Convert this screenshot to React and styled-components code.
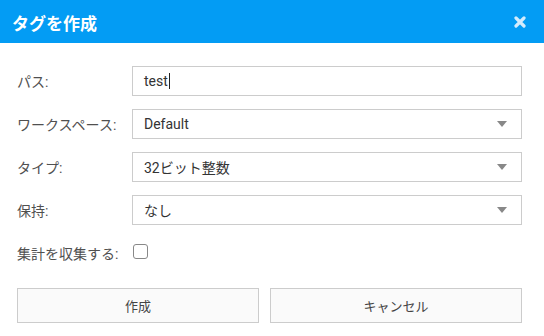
import React from 'react';
import styled, { createGlobalStyle } from 'styled-components';

const GlobalStyle = createGlobalStyle`
  body {
    margin: 0;
    background: #fff;
    font-family: Roboto, "Noto Sans CJK JP", sans-serif;
  }
`;

const Dialog = styled.div`
  width: 544px;
  height: 336px;
  background: #fff;
  overflow: hidden;
`;

const Header = styled.div`
  align-items: center;
  background: #039cf4;
  display: flex;
  height: 43px;
  justify-content: space-between;
  padding: 0 18px 0 12px;
`;

const Title = styled.h1`
  color: #fff;
  font-size: 17px;
  font-weight: bold;
  margin: 0;
  padding-top: 1px;
`;

const Close = styled.span`
  align-items: center;
  display: flex;
  height: 12px;
  justify-content: center;
  width: 12px;
`;

const Body = styled.div`
  display: flex;
  flex-direction: column;
  padding: 23px 22px 0 17px;
`;

const Row = styled.div`
  align-items: center;
  display: grid;
  grid-template-columns: 115px 1fr;
  height: 30px;
  margin-bottom: 13px;
`;

const Label = styled.label`
  color: #505050;
  font-size: 14px;
  font-weight: 400;
  white-space: nowrap;
`;

const Field = styled.div`
  align-items: center;
  border: 1px solid #ccc;
  box-sizing: border-box;
  color: #333;
  display: flex;
  font-size: 14px;
  height: 30px;
  justify-content: space-between;
  padding: 0 14px 0 11px;
`;

const Value = styled.span`
  font-weight: 400;
`;

const Caret = styled.span`
  background: #222;
  display: inline-block;
  height: 16px;
  margin-left: 1px;
  vertical-align: -3px;
  width: 1px;
`;

const Arrow = styled.span`
  border-left: 5px solid transparent;
  border-right: 5px solid transparent;
  border-top: 6px solid #888;
  height: 0;
  width: 0;
`;

const Check = styled.span`
  border: 1.5px solid #888;
  border-radius: 3px;
  box-sizing: border-box;
  display: inline-block;
  height: 15px;
  width: 15px;
`;

const CheckRow = styled(Row)`
  grid-template-columns: 116px 1fr;
  margin-bottom: 0;
`;

const Buttons = styled.div`
  display: grid;
  gap: 11px;
  grid-template-columns: 242px 252px;
  margin-top: 20px;
`;

const Button = styled.button`
  background: #fafafa;
  border: 1px solid #ccc;
  color: #444;
  font-family: Roboto, "Noto Sans CJK JP", sans-serif;
  font-size: 13px;
  font-weight: 400;
  height: 35px;
  padding: 0;
`;

export default function App() {
  return (
    <Dialog>
      <GlobalStyle />
      <Header>
        <Title>タグを作成</Title>
        <Close>
          <svg width="12" height="12" viewBox="0 0 12 12">
            <path d="M2 2 L10 10 M10 2 L2 10" stroke="#d3ecfd" strokeWidth="3.2" strokeLinecap="round" />
          </svg>
        </Close>
      </Header>
      <Body>
        <Row>
          <Label>パス:</Label>
          <Field>
            <Value>test<Caret /></Value>
          </Field>
        </Row>
        <Row>
          <Label>ワークスペース:</Label>
          <Field>
            <Value>Default</Value>
            <Arrow />
          </Field>
        </Row>
        <Row>
          <Label>タイプ:</Label>
          <Field>
            <Value>32ビット整数</Value>
            <Arrow />
          </Field>
        </Row>
        <Row>
          <Label>保持:</Label>
          <Field>
            <Value>なし</Value>
            <Arrow />
          </Field>
        </Row>
        <CheckRow>
          <Label>集計を収集する:</Label>
          <div><Check /></div>
        </CheckRow>
        <Buttons>
          <Button>作成</Button>
          <Button>キャンセル</Button>
        </Buttons>
      </Body>
    </Dialog>
  );
}
